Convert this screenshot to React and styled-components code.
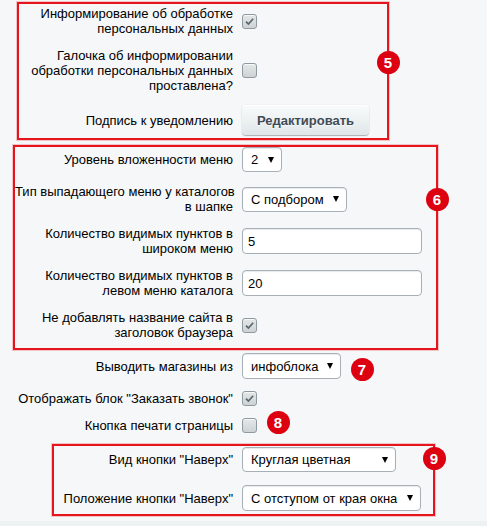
import React from 'react';
import styled, { createGlobalStyle } from 'styled-components';

const GlobalStyle = createGlobalStyle`
  html, body {
    margin: 0;
    padding: 0;
    background: #f5f7f8;
  }
  body {
    font-family: "Liberation Sans", Arial, sans-serif;
    font-size: 13px;
    color: #000;
  }
`;

const CONTROL_X = 242;
const LABEL_END = 233;

const Page = styled.div`
  width: 487px;
  min-height: 526px;
  display: flex;
  flex-direction: column;
`;

const Group = styled.div`
  display: flex;
  flex-direction: column;
  gap: ${({ $gap }) => $gap || 12}px;
  margin-top: ${({ $top }) => $top || 0}px;
`;

const Frame = styled(Group)`
  position: relative;
  box-sizing: border-box;
  margin-left: ${({ $left }) => $left}px;
  width: ${({ $width }) => $width}px;
  padding: ${({ $pad }) => $pad};
  border: 2px solid #e5141d;
  box-shadow: 0 0 0 1px rgba(229, 20, 29, 0.22);
`;

const Row = styled.div`
  display: grid;
  grid-template-columns: ${({ $labelWidth }) => $labelWidth}px auto;
  column-gap: ${CONTROL_X - LABEL_END}px;
  align-items: center;
`;

const Label = styled.div`
  text-align: right;
  white-space: nowrap;
  line-height: 15px;
`;

const Control = styled.div`
  position: relative;
  display: flex;
  align-items: center;
`;

const Box = styled.span`
  box-sizing: border-box;
  display: inline-flex;
  align-items: center;
  justify-content: center;
  width: 15px;
  height: 15px;
  border: 1px solid #8f999e;
  border-radius: 3px;
  background: linear-gradient(#e3e7e8, #cdd3d5);
  box-shadow: inset 0 1px 0 rgba(255, 255, 255, 0.7);
`;

const Checkbox = ({ checked }) => (
  <Box>
    {checked && (
      <svg width="11" height="11" viewBox="0 0 11 11">
        <path d="M2 5.6 L4.4 8 L9.2 2.8" fill="none" stroke="#59636a" strokeWidth="1.6" />
      </svg>
    )}
  </Box>
);

const SelectBox = styled.div`
  box-sizing: border-box;
  display: flex;
  align-items: center;
  justify-content: space-between;
  width: ${({ $width }) => $width}px;
  height: ${({ $height }) => $height || 25}px;
  padding: 0 7px 0 8px;
  background: #fff;
  border: 1px solid #a7b0b6;
  border-radius: 4px;
  box-shadow: inset 0 1px 1px rgba(160, 170, 176, 0.25);
  line-height: 15px;
  white-space: nowrap;
`;

const Arrow = styled.span`
  width: 0;
  height: 0;
  border-left: 3.5px solid transparent;
  border-right: 3.5px solid transparent;
  border-top: 6px solid #000;
`;

const Select = ({ value, width, height }) => (
  <SelectBox $width={width} $height={height}>
    <span>{value}</span>
    <Arrow />
  </SelectBox>
);

const TextInput = styled.input`
  box-sizing: border-box;
  width: 180px;
  height: 26px;
  padding: 0 5px;
  margin: 0;
  background: #fff;
  border: 1px solid #a7b0b6;
  border-radius: 4px;
  box-shadow: inset 0 1px 1px rgba(160, 170, 176, 0.25);
  font: 13px "Liberation Sans", Arial, sans-serif;
  color: #000;
  outline: none;
`;

const Button = styled.button`
  box-sizing: border-box;
  width: 127px;
  height: 30px;
  padding: 0;
  border: none;
  border-radius: 4px;
  background: linear-gradient(#f9fbfb, #e0e7e9);
  box-shadow: 0 0 1px rgba(0, 0, 0, 0.2), 0 1px 1px rgba(0, 0, 0, 0.28),
    inset 0 1px 0 #fff;
  font: bold 13px "Liberation Sans", Arial, sans-serif;
  color: #3f4b54;
  text-shadow: 0 1px rgba(255, 255, 255, 0.7);
`;

const Badge = styled.span`
  position: absolute;
  top: ${({ $top }) => $top}px;
  ${({ $right }) => ($right !== undefined ? `right: ${$right}px;` : '')}
  ${({ $left }) => ($left !== undefined ? `left: ${$left}px;` : '')}
  width: 23px;
  height: 23px;
  border-radius: 50%;
  background: #dc0010;
  color: #fff;
  font: bold 15px/23px "Liberation Sans", Arial, sans-serif;
  text-align: center;
  z-index: 2;
`;

const Footer = styled.div`
  flex: 1;
  margin-top: 5px;
  background: #edf1f2;
`;

const Lines = ({ children }) =>
  children.map((line, i) => (
    <React.Fragment key={i}>
      {i > 0 && <br />}
      {line}
    </React.Fragment>
  ));

const App = () => {
  const w5 = LABEL_END - 19;
  const w6 = LABEL_END - 15;
  const w9 = LABEL_END - 54;

  return (
    <Page>
      <GlobalStyle />

      <Frame $top={2} $left={17} $width={372} $pad="2px 0 3px">
        <Row $labelWidth={w5}>
          <Label><Lines>{['Информирование об обработке', 'персональных данных']}</Lines></Label>
          <Control><Checkbox checked /></Control>
        </Row>
        <Row $labelWidth={w5}>
          <Label>
            <Lines>{['Галочка об информировании', 'обработки персональных данных', 'проставлена?']}</Lines>
          </Label>
          <Control><Checkbox /></Control>
        </Row>
        <Row $labelWidth={w5}>
          <Label>Подпись к уведомлению</Label>
          <Control><Button>Редактировать</Button></Control>
        </Row>
        <Badge $right={-12.5} $top={46.5}>5</Badge>
      </Frame>

      <Frame $top={5} $left={13} $width={425} $pad="0 0 8px">
        <Row $labelWidth={w6}>
          <Label>Уровень вложенности меню</Label>
          <Control><Select value="2" width={40} /></Control>
        </Row>
        <Row $labelWidth={w6}>
          <Label><Lines>{['Тип выпадающего меню у каталогов', 'в шапке']}</Lines></Label>
          <Control><Select value="С подбором" width={105} /></Control>
        </Row>
        <Row $labelWidth={w6}>
          <Label><Lines>{['Количество видимых пунктов в', 'широком меню']}</Lines></Label>
          <Control><TextInput defaultValue="5" readOnly /></Control>
        </Row>
        <Row $labelWidth={w6}>
          <Label><Lines>{['Количество видимых пунктов в', 'левом меню каталога']}</Lines></Label>
          <Control><TextInput defaultValue="20" readOnly /></Control>
        </Row>
        <Row $labelWidth={w6}>
          <Label><Lines>{['Не добавлять название сайта в', 'заголовок браузера']}</Lines></Label>
          <Control><Checkbox checked /></Control>
        </Row>
        <Badge $right={-12.5} $top={40.5}>6</Badge>
      </Frame>

      <Group $top={3}>
        <Row $labelWidth={LABEL_END}>
          <Label>Выводить магазины из</Label>
          <Control>
            <Select value="инфоблока" width={99} height={26} />
            <Badge $left={108.5} $top={4.5}>7</Badge>
          </Control>
        </Row>
        <Row $labelWidth={LABEL_END}>
          <Label>Отображать блок "Заказать звонок"</Label>
          <Control><Checkbox checked /></Control>
        </Row>
        <Row $labelWidth={LABEL_END}>
          <Label>Кнопка печати страницы</Label>
          <Control>
            <Checkbox />
            <Badge $left={24.5} $top={-7}>8</Badge>
          </Control>
        </Row>
      </Group>

      <Frame $top={11} $left={52} $width={383} $pad="1px 0 3px" $gap={13}>
        <Row $labelWidth={w9}>
          <Label>Вид кнопки "Наверх"</Label>
          <Control><Select value="Круглая цветная" width={154} /></Control>
        </Row>
        <Row $labelWidth={w9}>
          <Label>Положение кнопки "Наверх"</Label>
          <Control><Select value="С отступом от края окна" width={179} height={26} /></Control>
        </Row>
        <Badge $right={-12.5} $top={0.5}>9</Badge>
      </Frame>

      <Footer />
    </Page>
  );
};

export default App;
